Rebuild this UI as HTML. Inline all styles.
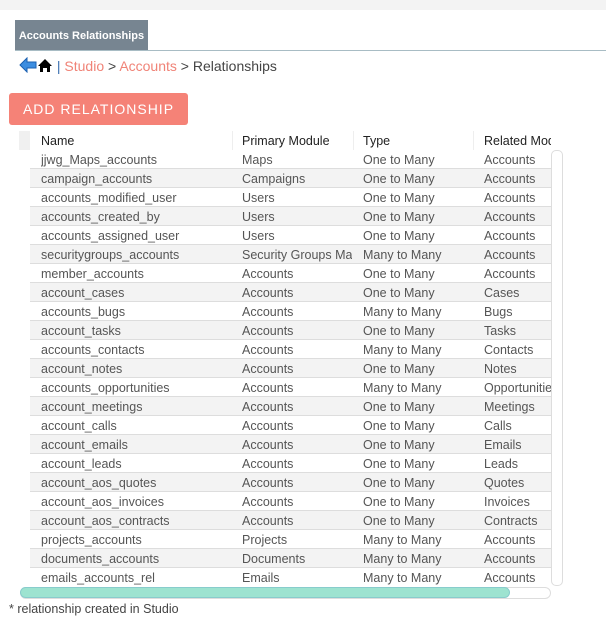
<!DOCTYPE html><html><head><style>
body{margin:0;width:606px;height:621px;background:#fff;font-family:"Liberation Sans",sans-serif;position:relative;overflow:hidden;color:#555}
.top{position:absolute;left:0;top:0;width:606px;height:10px;background:#f3f3f3}
.tab{position:absolute;left:15px;top:20px;width:133px;height:30px;background:#778591;color:#fff;font-size:11px;font-weight:bold;line-height:32px;text-align:center}
.line{position:absolute;left:15px;top:50px;width:591px;height:1px;background:#a8bcc4}
.crumb{position:absolute;left:19px;top:57px;font-size:14px;color:#444}
.crumb a{color:#f08377}
.btn{position:absolute;left:9px;top:93px;width:179px;height:32px;background:#f58277;border-radius:3px;color:#fff;font-size:14px;letter-spacing:1px;line-height:32px;text-align:center}
.tbl{position:absolute;left:30px;top:131px;width:521px;overflow:hidden}
.row{height:19px;border-bottom:1px solid #ddd;box-sizing:border-box;font-size:12.5px;line-height:20px;white-space:nowrap;position:relative}
.row span{position:absolute;top:0;overflow:hidden}
.hd{background:#fff!important;color:#222;border-bottom:none}
.c1{left:11px;width:190px}.c2{left:212px;width:110px}.c3{left:333px}.c4{left:454px}
</style></head><body>
<div class="top"></div>
<div class="tab">Accounts Relationships</div>
<div class="line"></div>
<div class="crumb"><svg width="18" height="16" viewBox="0 0 18 16" style="vertical-align:-2px"><path d="M1 8 L8 1 L8 5 L17 5 L17 11 L8 11 L8 15Z" fill="#3c8de0" stroke="#1a5fb0"/></svg><svg width="16" height="15" viewBox="0 0 16 15" style="vertical-align:-2px"><path d="M8 1 L15 8 L13 8 L13 14 L10 14 L10 10 L6 10 L6 14 L3 14 L3 8 L1 8Z" fill="#000"/></svg> <span style="color:#3a6fb0">|</span> <a>Studio</a> &gt; <a>Accounts</a> &gt; Relationships</div>
<div class="btn">ADD RELATIONSHIP</div>
<div style="position:absolute;left:19px;top:131px;width:11px;height:19px;background:#f0f0f0"></div>
<div class="tbl">
<div class="row hd"><span class="c1">Name</span><span class="c2">Primary Module</span><span class="c3">Type</span><span class="c4">Related Module</span></div>
<div class="row" style="background:#fff"><span class="c1">jjwg_Maps_accounts</span><span class="c2">Maps</span><span class="c3">One to Many</span><span class="c4">Accounts</span></div>
<div class="row" style="background:#f3f3f3"><span class="c1">campaign_accounts</span><span class="c2">Campaigns</span><span class="c3">One to Many</span><span class="c4">Accounts</span></div>
<div class="row" style="background:#fff"><span class="c1">accounts_modified_user</span><span class="c2">Users</span><span class="c3">One to Many</span><span class="c4">Accounts</span></div>
<div class="row" style="background:#f3f3f3"><span class="c1">accounts_created_by</span><span class="c2">Users</span><span class="c3">One to Many</span><span class="c4">Accounts</span></div>
<div class="row" style="background:#fff"><span class="c1">accounts_assigned_user</span><span class="c2">Users</span><span class="c3">One to Many</span><span class="c4">Accounts</span></div>
<div class="row" style="background:#f3f3f3"><span class="c1">securitygroups_accounts</span><span class="c2">Security Groups Ma</span><span class="c3">Many to Many</span><span class="c4">Accounts</span></div>
<div class="row" style="background:#fff"><span class="c1">member_accounts</span><span class="c2">Accounts</span><span class="c3">One to Many</span><span class="c4">Accounts</span></div>
<div class="row" style="background:#f3f3f3"><span class="c1">account_cases</span><span class="c2">Accounts</span><span class="c3">One to Many</span><span class="c4">Cases</span></div>
<div class="row" style="background:#fff"><span class="c1">accounts_bugs</span><span class="c2">Accounts</span><span class="c3">Many to Many</span><span class="c4">Bugs</span></div>
<div class="row" style="background:#f3f3f3"><span class="c1">account_tasks</span><span class="c2">Accounts</span><span class="c3">One to Many</span><span class="c4">Tasks</span></div>
<div class="row" style="background:#fff"><span class="c1">accounts_contacts</span><span class="c2">Accounts</span><span class="c3">Many to Many</span><span class="c4">Contacts</span></div>
<div class="row" style="background:#f3f3f3"><span class="c1">account_notes</span><span class="c2">Accounts</span><span class="c3">One to Many</span><span class="c4">Notes</span></div>
<div class="row" style="background:#fff"><span class="c1">accounts_opportunities</span><span class="c2">Accounts</span><span class="c3">Many to Many</span><span class="c4">Opportunities</span></div>
<div class="row" style="background:#f3f3f3"><span class="c1">account_meetings</span><span class="c2">Accounts</span><span class="c3">One to Many</span><span class="c4">Meetings</span></div>
<div class="row" style="background:#fff"><span class="c1">account_calls</span><span class="c2">Accounts</span><span class="c3">One to Many</span><span class="c4">Calls</span></div>
<div class="row" style="background:#f3f3f3"><span class="c1">account_emails</span><span class="c2">Accounts</span><span class="c3">One to Many</span><span class="c4">Emails</span></div>
<div class="row" style="background:#fff"><span class="c1">account_leads</span><span class="c2">Accounts</span><span class="c3">One to Many</span><span class="c4">Leads</span></div>
<div class="row" style="background:#f3f3f3"><span class="c1">account_aos_quotes</span><span class="c2">Accounts</span><span class="c3">One to Many</span><span class="c4">Quotes</span></div>
<div class="row" style="background:#fff"><span class="c1">account_aos_invoices</span><span class="c2">Accounts</span><span class="c3">One to Many</span><span class="c4">Invoices</span></div>
<div class="row" style="background:#f3f3f3"><span class="c1">account_aos_contracts</span><span class="c2">Accounts</span><span class="c3">One to Many</span><span class="c4">Contracts</span></div>
<div class="row" style="background:#fff"><span class="c1">projects_accounts</span><span class="c2">Projects</span><span class="c3">Many to Many</span><span class="c4">Accounts</span></div>
<div class="row" style="background:#f3f3f3"><span class="c1">documents_accounts</span><span class="c2">Documents</span><span class="c3">Many to Many</span><span class="c4">Accounts</span></div>
<div class="row" style="background:#fff;border-bottom:none"><span class="c1">emails_accounts_rel</span><span class="c2">Emails</span><span class="c3">Many to Many</span><span class="c4">Accounts</span></div>
</div>
<div style="position:absolute;left:232px;top:131px;width:1px;height:19px;background:#eee"></div>
<div style="position:absolute;left:353px;top:131px;width:1px;height:19px;background:#eee"></div>
<div style="position:absolute;left:473px;top:131px;width:1px;height:19px;background:#eee"></div>
<div style="position:absolute;left:551px;top:150px;width:10px;height:434px;border:1px solid #ddd;border-radius:5px;background:#fff"></div>
<div style="position:absolute;left:20px;top:587px;width:529px;height:10px;border:1px solid #ddd;border-radius:6px;background:#fff"></div>
<div style="position:absolute;left:20px;top:587px;width:490px;height:11px;border:1px solid #8cc;border-radius:6px;background:#9de3d0;box-sizing:border-box"></div>
<div style="position:absolute;left:9px;top:602px;font-size:12.5px;color:#444">* relationship created in Studio</div>
</body></html>
